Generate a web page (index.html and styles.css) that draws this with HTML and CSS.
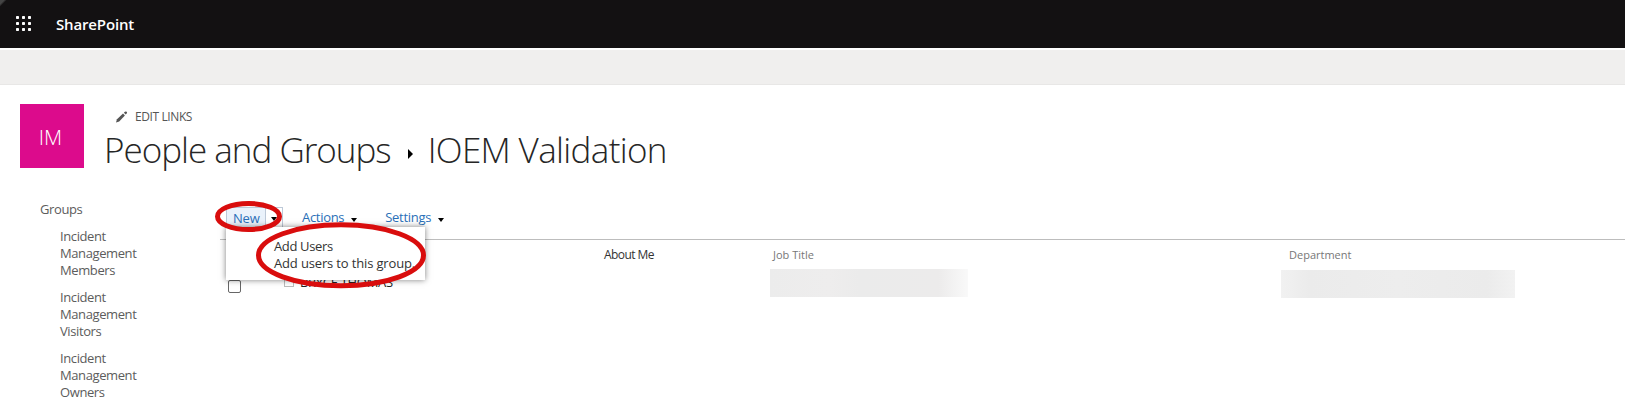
FILE: index.html
```html
<!DOCTYPE html>
<html lang="en">
<head>
<meta charset="utf-8">
<title>People and Groups - IOEM Validation</title>
<link rel="stylesheet" href="styles.css">
</head>
<body>
<header class="suite-bar">
  <svg class="waffle" width="16" height="16" viewBox="0 0 16 16" fill="#fff"><rect width="3" height="3" rx=".7"/><rect x="6" width="3" height="3" rx=".7"/><rect x="12" width="3" height="3" rx=".7"/><rect y="6" width="3" height="3" rx=".7"/><rect x="6" y="6" width="3" height="3" rx=".7"/><rect x="12" y="6" width="3" height="3" rx=".7"/><rect y="12" width="3" height="3" rx=".7"/><rect x="6" y="12" width="3" height="3" rx=".7"/><rect x="12" y="12" width="3" height="3" rx=".7"/></svg>
  <span class="brand">SharePoint</span>
</header>
<div class="ribbon"></div>
<section class="site-head">
  <div class="site-logo">IM</div>
  <div class="head-text">
    <div class="edit-links">
      <svg width="12" height="12" viewBox="0 0 12 12" fill="#555"><path d="M0 11.500 1 8.300 7 2.600 8.900 4.500 3.200 10.400Z"/><path d="M7.900 1.800 8.900.8Q9.800 0 10.700.8 11.500 1.700 10.700 2.600L9.700 3.600Z"/></svg>
      <span>EDIT LINKS</span>
    </div>
    <h1 class="title"><span class="crumb">People and Groups</span><svg class="sep" width="5" height="14" viewBox="0 0 5 14"><path d="M0 0 5 5 0 10Z"/></svg><span class="page">IOEM Validation</span></h1>
  </div>
</section>
<div class="body">
  <nav class="side">
    <div class="side-title">Groups</div>
    <a class="group">Incident<br>Management<br>Members</a>
    <a class="group">Incident<br>Management<br>Visitors</a>
    <a class="group">Incident<br>Management<br>Owners</a>
  </nav>
  <main class="content">
    <div class="toolbar">
      <div class="new-button"><span class="new-label">New</span><span class="new-arrow"><i class="caret"></i></span></div>
      <div class="tool actions"><span>Actions</span><i class="caret"></i></div>
      <div class="tool settings"><span>Settings</span><i class="caret"></i></div>
      <div class="menu"><div class="menu-name">Add Users</div><div class="menu-desc">Add users to this group.</div></div>
    </div>
    <div class="grid">
      <div class="col people"><span class="check"></span><span class="presence"></span><span class="person">BRYCE THOMAS</span></div>
      <div class="col about"><span>About Me</span></div>
      <div class="col job"><span>Job Title</span><div class="redacted"></div></div>
      <div class="col dept"><span>Department</span><div class="redacted"></div></div>
    </div>
  </main>
</div>
<svg class="marks" width="1625" height="405" fill="none" stroke="#d90d0d" stroke-width="5"><ellipse cx="248.500" cy="216.500" rx="31" ry="13"/><ellipse cx="341" cy="255.300" rx="82.500" ry="30.500"/></svg>
</body>
</html>
```
FILE: styles.css
```css
* { box-sizing: border-box; }
body { margin: 0; width: 1625px; height: 405px; overflow: hidden; position: relative; background: #fff; color: #444; font-family: "Open Sans", "Noto Sans", sans-serif; font-size: 13px; line-height: 17px; white-space: nowrap; }
.suite-bar { height: 48px; background: linear-gradient(135deg, #444 0 3px, #131112 5px); display: flex; align-items: center; padding: 0 0 1px 16px; }
.brand { margin-left: 24px; color: #fff; font-size: 15px; font-weight: 600; letter-spacing: -.15px; line-height: 20px; }
.ribbon { height: 37px; margin-bottom: 19px; background: #f0efee; border-top: 2px solid #fff; border-bottom: 1px solid #e8e7e6; }
.site-head { display: flex; height: 96px; padding-left: 20px; }
.site-logo { width: 64px; height: 64px; background: #dc0b8c; color: #fff; font-size: 21px; font-weight: 300; display: flex; align-items: center; justify-content: center; padding: 3px 3px 0 0; }
.head-text { padding-left: 22px; }
.edit-links { display: flex; align-items: center; height: 17px; margin: 4px 0 0 10px; font-size: 12px; color: #555; gap: 7px; letter-spacing: -.4px; }
.title { display: flex; align-items: baseline; margin: 1px 0 0 -2px; font-size: 35px; font-weight: 300; line-height: 48px; color: #262626; }
.crumb { letter-spacing: -1px; }
.page { letter-spacing: -.65px; }
.sep { margin: 0 15px 0 17px; fill: #000; }
.body { display: flex; }
.side { width: 220px; padding: 1px 0 0 40px; color: #5c5c5c; letter-spacing: -.4px; }
.side-title { margin-bottom: 10px; }
.group { display: block; margin: 0 0 10px 20px; }
.content { flex: 1; }
.toolbar { position: relative; height: 40px; padding: 7px 0 0 6px; display: flex; color: #2a70b8; border-bottom: 1px solid #bdbdbd; }
.new-button { display: flex; width: 57px; height: 22px; border: 1px solid #bdc9d8; }
.new-label { width: 39px; padding-left: 6px; background: #eaf2fb; border-right: 1px solid #bdc9d8; line-height: 21px; letter-spacing: -.2px; }
.new-arrow { padding: 9px 0 0 5px; }
.caret { width: 0; height: 0; border: 3px solid transparent; border-top: 4px solid #000; border-bottom: 0; display: block; }
.tool { display: flex; line-height: 21px; gap: 7px; letter-spacing: -.3px; }
.tool .caret { margin-top: 11px; }
.actions { margin-left: 19px; }
.settings { margin-left: 28px; }
.menu { position: absolute; left: 6px; top: 27px; width: 199px; height: 53px; padding: 11px 0 0 48px; background: #fff; color: #333; box-shadow: 0 0 6px rgba(0,0,0,.5); z-index: 2; }
.menu-name { letter-spacing: -.35px; }
.menu-desc { letter-spacing: -.15px; }
.grid { display: flex; height: 80px; }
.col { padding-top: 6px; }
.people { width: 384px; display: flex; padding: 39px 0 0 8px; color: #222; }
.check { width: 13px; height: 13px; margin-top: 1px; border: 1px solid #666; border-radius: 2px; }
.presence { width: 10px; height: 10px; margin: -2px 6px 0 43px; border: 1px solid #bbb; }
.person { margin-top: -5px; letter-spacing: -.3px; }
.about { width: 166px; font-size: 12px; color: #333; letter-spacing: -.55px; }
.job, .dept { font-size: 11px; color: #777; }
.job { width: 511px; }
.job span { margin-left: 3px; }
.dept span { margin-left: 8px; }
.redacted { height: 28px; margin-top: 6px; }
.job .redacted { width: 198px; background: linear-gradient(90deg, #ececec, #eeeded 30%, #ebebeb 45%, #ecebeb 85%, #f9f9f9); }
.dept .redacted { width: 234px; margin-top: 7px; background: linear-gradient(90deg, #f1f1f1, #ebebeb 12%, #ededed 50%, #ebebeb 88%, #f2f2f2); }
.marks { position: absolute; left: 0; top: 0; z-index: 3; }
```
